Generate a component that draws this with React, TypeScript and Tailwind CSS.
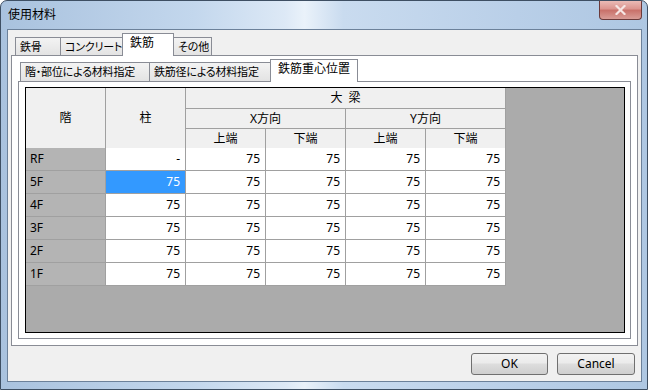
import React from "react";

type TabProps = {
	label: string;
	w: string;
	active?: boolean;
	first?: boolean;
	tall?: boolean;
};

const Tab = ({ label, w, active, first, tall }: TabProps) => {
	if (active) {
		return (
			<div className={`relative z-10 -ml-px mb-[-1px] h-[23px] ${w} whitespace-nowrap border border-b-0 border-[#898c95] bg-white pl-[7px] pt-[1px] text-[12px] leading-[16px]`}>
				{label}
			</div>
		);
	}
	return (
		<div
			className={`${first ? "" : "-ml-px"} flex ${tall ? "h-[19px]" : "h-[18px]"} ${w} items-center overflow-hidden whitespace-nowrap border border-b-0 border-[#898c95] bg-[linear-gradient(#f3f3f3,#e3e3e3)] pl-[4px] text-[11px] leading-[16px] tracking-[-0.2px]`}
		>
			{label}
		</div>
	);
};

const floors = ["RF", "5F", "4F", "3F", "2F", "1F"];

const HeadCell = ({ children, className }: { children?: React.ReactNode; className: string }) => (
	<div className={`flex items-center justify-center border-r border-[#a0a0a0] bg-[#f0f0f0] text-[12px] ${className}`}>{children}</div>
);

const RebarGrid = () => {
	return (
		<div className="grid grid-cols-[repeat(6,80px)] grid-rows-[21px_20px_19px_repeat(6,23px)]">
			<HeadCell className="row-span-3">階</HeadCell>
			<HeadCell className="row-span-3">柱</HeadCell>
			<HeadCell className="col-span-4 border-b">大&nbsp;&nbsp;梁</HeadCell>
			<HeadCell className="col-span-2 border-b">X方向</HeadCell>
			<HeadCell className="col-span-2 border-b">Y方向</HeadCell>
			<HeadCell className="">上端</HeadCell>
			<HeadCell className="">下端</HeadCell>
			<HeadCell className="">上端</HeadCell>
			<HeadCell className="">下端</HeadCell>

			{floors.map((f) => (
				<React.Fragment key={f}>
					<div className="flex items-center border-r border-b border-[#a0a0a0] bg-[#b4b4b4] pl-[4px] text-[12px]">{f}</div>
					<div
						className={`flex items-center justify-end border-r border-b border-[#a0a0a0] pr-[5px] text-[12px] ${
							f === "5F" ? "bg-[#3399ff] text-white" : "bg-white"
						}`}
					>
						{f === "RF" ? "-" : "75"}
					</div>
					{[0, 1, 2, 3].map((i) => (
						<div key={i} className="flex items-center justify-end border-r border-b border-[#a0a0a0] bg-white pr-[5px] text-[12px]">
							75
						</div>
					))}
				</React.Fragment>
			))}
		</div>
	);
};

const Button = ({ label, w }: { label: string; w: string }) => (
	<div
		className={`flex h-[22px] ${w} items-center justify-center rounded-[3px] border border-[#707070] bg-[linear-gradient(#f2f2f2,#ebebeb_45%,#dddddd_50%,#cfcfcf)] text-[12px]`}
	>
		{label}
	</div>
);

export default function App() {
	return (
		<div className="h-[390px] w-[648px] overflow-hidden rounded-t-[7px] border border-[#3e4f63] bg-[linear-gradient(to_right,#a9c2de,#c3d7ed_30%,#dde9f6_44%,#eaf2fa_47%,#c9dbef_53%,#b9cfe8_80%,#aec7e2)] font-[family-name:'Noto_Sans','Noto_Sans_CJK_JP',sans-serif] text-black [font-feature-settings:'palt']">
			<div className="flex h-[28px] items-start justify-between">
				<div className="pl-[7px] pt-[6px] text-[12px] leading-[16px]">使用材料</div>
				<div className="-mt-px mr-[5px] flex h-[20px] w-[43px] items-center justify-center rounded-b-[4px] border border-t-0 border-[#6b3a3a] bg-[linear-gradient(#ecc0bb,#dc9690_45%,#c9726b_55%,#d99d97)]">
					<svg width="11" height="10" viewBox="0 0 11 10">
						<path d="M1.5 1 L9.5 9 M9.5 1 L1.5 9" stroke="#f6e6e4" strokeWidth="2.2" strokeLinecap="square" />
					</svg>
				</div>
			</div>

			<div className="ml-[6px] h-[353px] w-[635px] border border-[#6c819a] bg-[#f0f0f0]">
				{/* outer tabs */}
				<div className="ml-[7px] flex items-end pt-[3px]">
					<Tab label="鉄骨" w="w-[46px]" first />
					<Tab label="コンクリート" w="w-[63px]" />
					<Tab label="鉄筋" w="w-[52px]" active />
					<Tab label="その他" w="w-[39px]" />
				</div>
				<div className="ml-[3px] h-[291px] w-[627px] border border-[#898c95] bg-white">
					{/* inner tabs */}
					<div className="ml-[8px] flex items-end pt-[3px]">
						<Tab label="階・部位による材料指定" w="w-[130px]" first tall />
						<Tab label="鉄筋径による材料指定" w="w-[122px]" tall />
						<Tab label="鉄筋重心位置" w="w-[88px]" active />
					</div>
					<div className="ml-[6px] h-[258px] w-[613px] border border-[#898c95] bg-white">
						<div className="ml-[6px] mt-[5px] h-[246px] w-[600px] border border-black bg-[#ababab]">
							<RebarGrid />
						</div>
					</div>
				</div>

				<div className="mt-[7px] flex justify-end gap-[9px] pr-[6px]">
					<Button label="OK" w="w-[77px]" />
					<Button label="Cancel" w="w-[78px]" />
				</div>
			</div>
		</div>
	);
}
